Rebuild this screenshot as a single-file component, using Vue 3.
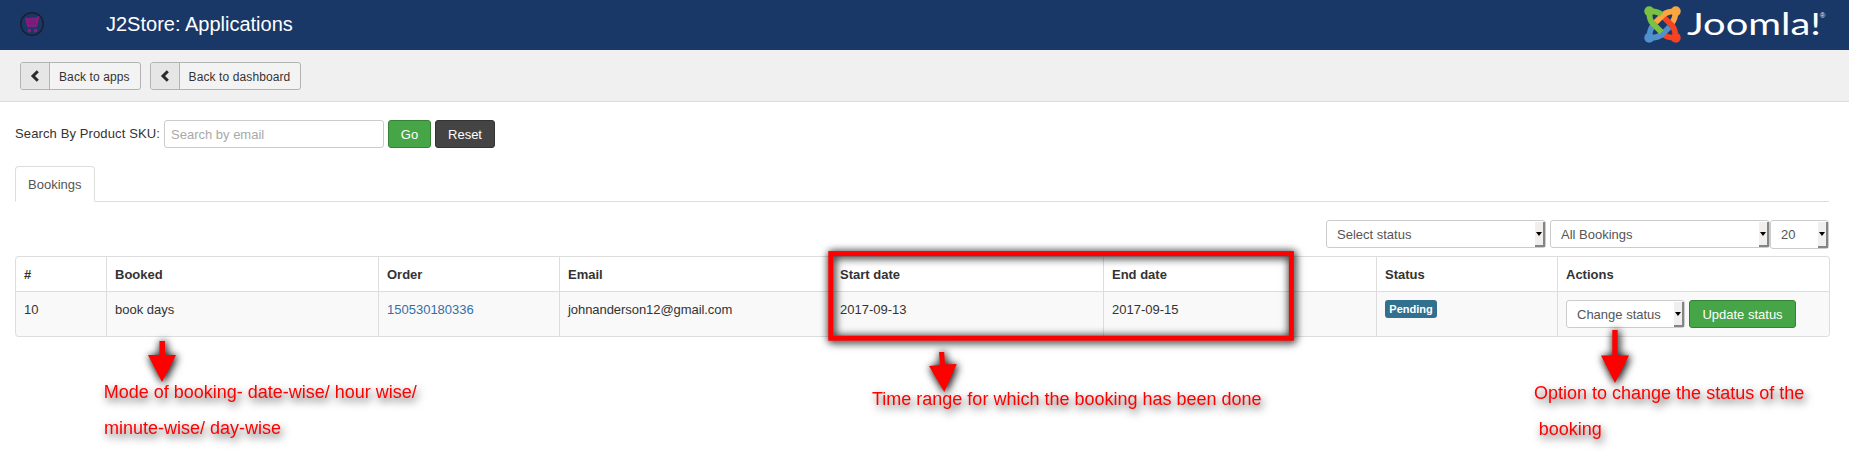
<script setup>
const toolbar = ['Back to apps', 'Back to dashboard']
const columns = [
  { title: '#', width: 91 },
  { title: 'Booked', width: 272 },
  { title: 'Order', width: 181 },
  { title: 'Email', width: 272 },
  { title: 'Start date', width: 272 },
  { title: 'End date', width: 273 },
  { title: 'Status', width: 181 },
  { title: 'Actions', width: 272 },
]
</script>

<template>
  <div class="page">
    <header class="header">
      <svg class="cart" width="24" height="24" viewBox="0 0 24 24">
        <circle cx="12" cy="12" r="11.2" fill="none" stroke="#1b1f2b" stroke-width="1.5" />
        <path d="M5 6.2L16.8 5.4L17.6 4.2H19.6L16.8 15.2H7.4Z" fill="#8d1b7c" />
        <path d="M6 9H18M6.5 11.8H17.5M9 6L10 15M12 6V15M15 6L14.4 15" stroke="#4c2874" stroke-width=".5" />
        <rect x="8" y="17" width="3" height="3" fill="#8d1b7c" />
        <rect x="14" y="17" width="3" height="3" fill="#8d1b7c" />
      </svg>
      <h1>J2Store: Applications</h1>
      <div class="brand">
        <svg class="knot" width="37" height="37" viewBox="0 0 37 37">
          <g fill="none" stroke-width="5.8" stroke-linejoin="round">
            <path d="M31.8 5.2C31.5 11 30.5 14 27.5 17.5" stroke="#f9a541" />
            <path d="M31.8 31.8C25 32 22 31 18.8 28" stroke="#f44321" />
            <path d="M5.2 31.8C5.5 26 6 23 9 19.8" stroke="#5091cd" />
            <path d="M5.2 31.8C12 32 15 31 18.5 28L25.5 21" stroke="#5091cd" />
            <path d="M31.8 31.8C31.5 25 30.5 22 27.5 19L19.5 11" stroke="#f44321" />
            <path d="M31.8 5.2C25 5.4 22 6.2 18.8 9.2L11.5 16.5" stroke="#f9a541" />
            <path d="M5.2 5.2C12 5.2 14.5 6 17.5 8.6" stroke="#7ac143" />
            <path d="M5.2 5.2C5.5 12 6 14.5 9 17.8L17.5 26.3" stroke="#7ac143" />
          </g>
          <circle cx="5.2" cy="5.2" r="4.9" fill="#7ac143" />
          <circle cx="31.8" cy="5.2" r="4.9" fill="#f9a541" />
          <circle cx="31.8" cy="31.8" r="4.9" fill="#f44321" />
          <circle cx="5.2" cy="31.8" r="4.9" fill="#5091cd" />
        </svg>
        <svg class="wordmark" width="142" height="46" viewBox="0 0 142 46">
          <text x="0" y="33" textLength="134" lengthAdjust="spacingAndGlyphs">Joomla!</text>
          <text class="reg" x="133" y="16">®</text>
        </svg>
      </div>
    </header>

    <nav class="toolbar">
      <button v-for="label in toolbar" :key="label" class="tool">
        <span class="tool-icon">
          <svg width="10" height="12" viewBox="0 0 10 12">
            <path d="M7.8 1.2L3 6L7.8 10.8" fill="none" stroke="#2b2b2b" stroke-width="3" />
          </svg>
        </span>
        <span class="tool-label">{{ label }}</span>
      </button>
    </nav>

    <main>
      <div class="search">
        <label>Search By Product SKU:</label>
        <input type="text" placeholder="Search by email" />
        <button class="btn green go">Go</button>
        <button class="btn dark reset">Reset</button>
      </div>

      <div class="tabs"><div class="tab">Bookings</div></div>

      <div class="filters">
        <div class="select wide"><span>Select status</span><i></i></div>
        <div class="select wide"><span>All Bookings</span><i></i></div>
        <div class="select limit"><span>20</span><i></i></div>
      </div>

      <table>
        <colgroup>
          <col v-for="c in columns" :key="c.title" :style="{ width: c.width + 'px' }" />
        </colgroup>
        <thead>
          <tr><th v-for="c in columns" :key="c.title">{{ c.title }}</th></tr>
        </thead>
        <tbody>
          <tr>
            <td>10</td>
            <td>book days</td>
            <td><a>150530180336</a></td>
            <td class="email">johnanderson12@gmail.com</td>
            <td>2017-09-13</td>
            <td>2017-09-15</td>
            <td class="controls"><span class="badge">Pending</span></td>
            <td class="controls">
              <div class="actions">
                <div class="select change"><span>Change status</span><i></i></div>
                <button class="btn green update">Update status</button>
              </div>
            </td>
          </tr>
        </tbody>
      </table>
    </main>

    <svg class="notes" width="1849" height="472" viewBox="0 0 1849 472">
      <rect class="mark" x="830.8" y="253.6" width="460.6" height="84.6" fill="none" stroke="#f00" stroke-width="5" />
      <g class="mark" fill="#f00">
        <path d="M159.5 341H165V355H176L162 382L148 355H159.5Z" />
        <path d="M939 352H944.2L945 364.5L956.7 364L944.3 392L929 366L940 365Z" />
        <path d="M1612.3 330H1617.7V355.5H1629L1615 383L1601 355.5H1612.3Z" />
      </g>
      <g class="note">
        <text x="103.7" y="398">Mode of booking- date-wise/ hour wise/</text>
        <text x="104" y="434">minute-wise/ day-wise</text>
        <text x="872" y="405">Time range for which the booking has been done</text>
        <text x="1534" y="399">Option to change the status of the</text>
        <text x="1538.7" y="435">booking</text>
      </g>
    </svg>
  </div>
</template>

<style>
body { background: #fff; }
</style>

<style scoped>
.page {
  position: relative;
  width: 1849px;
  height: 472px;
  overflow: hidden;
  font: 13px/18px "Liberation Sans", Arial, sans-serif;
  color: #333;
}
.page * { box-sizing: border-box; }
.header {
  display: flex;
  align-items: center;
  height: 50px;
  padding: 0 20px;
  background: #1a3867;
}
.cart { margin-top: -2px; }
h1 {
  margin: 0 auto 0 62px;
  padding-bottom: 2px;
  font-size: 20px;
  line-height: 30px;
  font-weight: 400;
  color: #fff;
}
.brand { display: flex; gap: 6px; height: 50px; padding-top: 2px; }
.knot { margin-top: 4px; }
.wordmark text { font: 400 30px "Lato", sans-serif; fill: #fff; }
.wordmark .reg { font: 7px "Liberation Sans", sans-serif; }
.toolbar {
  display: flex;
  gap: 9px;
  height: 52px;
  padding: 12px 20px 0;
  background: #f0f0f0;
  border-bottom: 1px solid #ddd;
}
button { font: 13px/18px "Liberation Sans", Arial, sans-serif; margin: 0; }
.tool {
  display: flex;
  height: 28px;
  padding: 0;
  border: 1px solid #b3b3b3;
  border-radius: 3px;
  background: #f3f3f3;
  overflow: hidden;
  color: #333;
  font-size: 12px;
}
.tool-icon {
  display: flex;
  align-items: center;
  justify-content: center;
  width: 29px;
  height: 26px;
  background: #e6e6e6;
  border-right: 1px solid #b3b3b3;
}
.tool-label { padding: 0 10px 0 9px; line-height: 28px; letter-spacing: .1px; }
main { padding: 18px 20px 0 15px; }
.search { display: flex; height: 28px; }
.search label { width: 149px; line-height: 27px; white-space: nowrap; letter-spacing: .12px; }
input {
  width: 220px;
  height: 28px;
  margin-right: 4px;
  padding: 1px 6px 0;
  border: 1px solid #ccc;
  border-radius: 3px;
  font: 13px "Liberation Sans", Arial, sans-serif;
}
input::placeholder { color: #a9a9a9; }
.btn {
  height: 28px;
  padding: 1px 0 0;
  border-radius: 3px;
  color: #fff;
}
.green { background: #46a546; border: 1px solid #378137; }
.dark { background: #444; border: 1px solid #333; }
.go { width: 43px; margin-right: 4px; }
.reset { width: 60px; }
.tabs { display: flex; height: 36px; margin-top: 18px; border-bottom: 1px solid #ddd; }
.tab {
  width: 80px;
  height: 36px;
  padding: 9px 0 0 12px;
  border: 1px solid #ddd;
  border-bottom-color: #fff;
  border-radius: 4px 4px 0 0;
  background: #fff;
  color: #555;
}
.filters { display: flex; justify-content: flex-end; height: 36px; margin-top: 18px; }
.select {
  display: flex;
  justify-content: space-between;
  height: 28px;
  padding-left: 10px;
  border: 1px solid #ccc;
  border-radius: 3px;
  background: #fff;
  color: #555;
  line-height: 28px;
  white-space: nowrap;
}
.select i {
  display: flex;
  align-items: center;
  justify-content: center;
  width: 10px;
  margin: 1px 0 0;
  background: #f0efee;
  border-right: 2px solid #858585;
  border-bottom: 2px solid #858585;
}
.select i::after {
  content: "";
  border: 3px solid transparent;
  border-top: 4px solid #000;
  border-bottom: 0;
}
.wide { width: 220px; margin-right: 4px; }
.wide + .wide { margin-right: 0; }
.limit { width: 59px; height: 29px; }
table {
  width: 1814px;
  height: 81px;
  table-layout: fixed;
  border-collapse: separate;
  border-spacing: 0;
  border: 1px solid #ddd;
  border-left: 0;
  border-radius: 4px;
}
th, td {
  padding: 9px 8px 7px;
  border-left: 1px solid #ddd;
  text-align: left;
  vertical-align: top;
}
th { height: 34px; }
th:first-child { border-top-left-radius: 4px; }
td { height: 45px; border-top: 1px solid #ddd; background: #f9f9f9; }
td.controls { padding: 8px; }
td:first-child { border-bottom-left-radius: 4px; }
td:last-child { border-bottom-right-radius: 4px; }
.email { letter-spacing: -.06px; }
a { color: #3071a9; }
.badge {
  display: block;
  width: 52px;
  height: 18px;
  border-radius: 3px;
  background: #31708f;
  color: #fff;
  font-size: 11px;
  font-weight: 700;
  line-height: 19px;
  text-align: center;
}
.actions { display: flex; gap: 4px; }
.change { width: 119px; }
.update { width: 107px; }
.notes { position: absolute; left: 0; top: 0; }
.note text { font: 18px "Liberation Sans", Arial, sans-serif; fill: #f00; }
.mark { filter: drop-shadow(1px 1px 4.5px #000) drop-shadow(1px 1px 3px rgba(0, 0, 0, .25)); }
.note { filter: drop-shadow(2px 4px 4px rgba(0, 0, 0, .7)); }
</style>
